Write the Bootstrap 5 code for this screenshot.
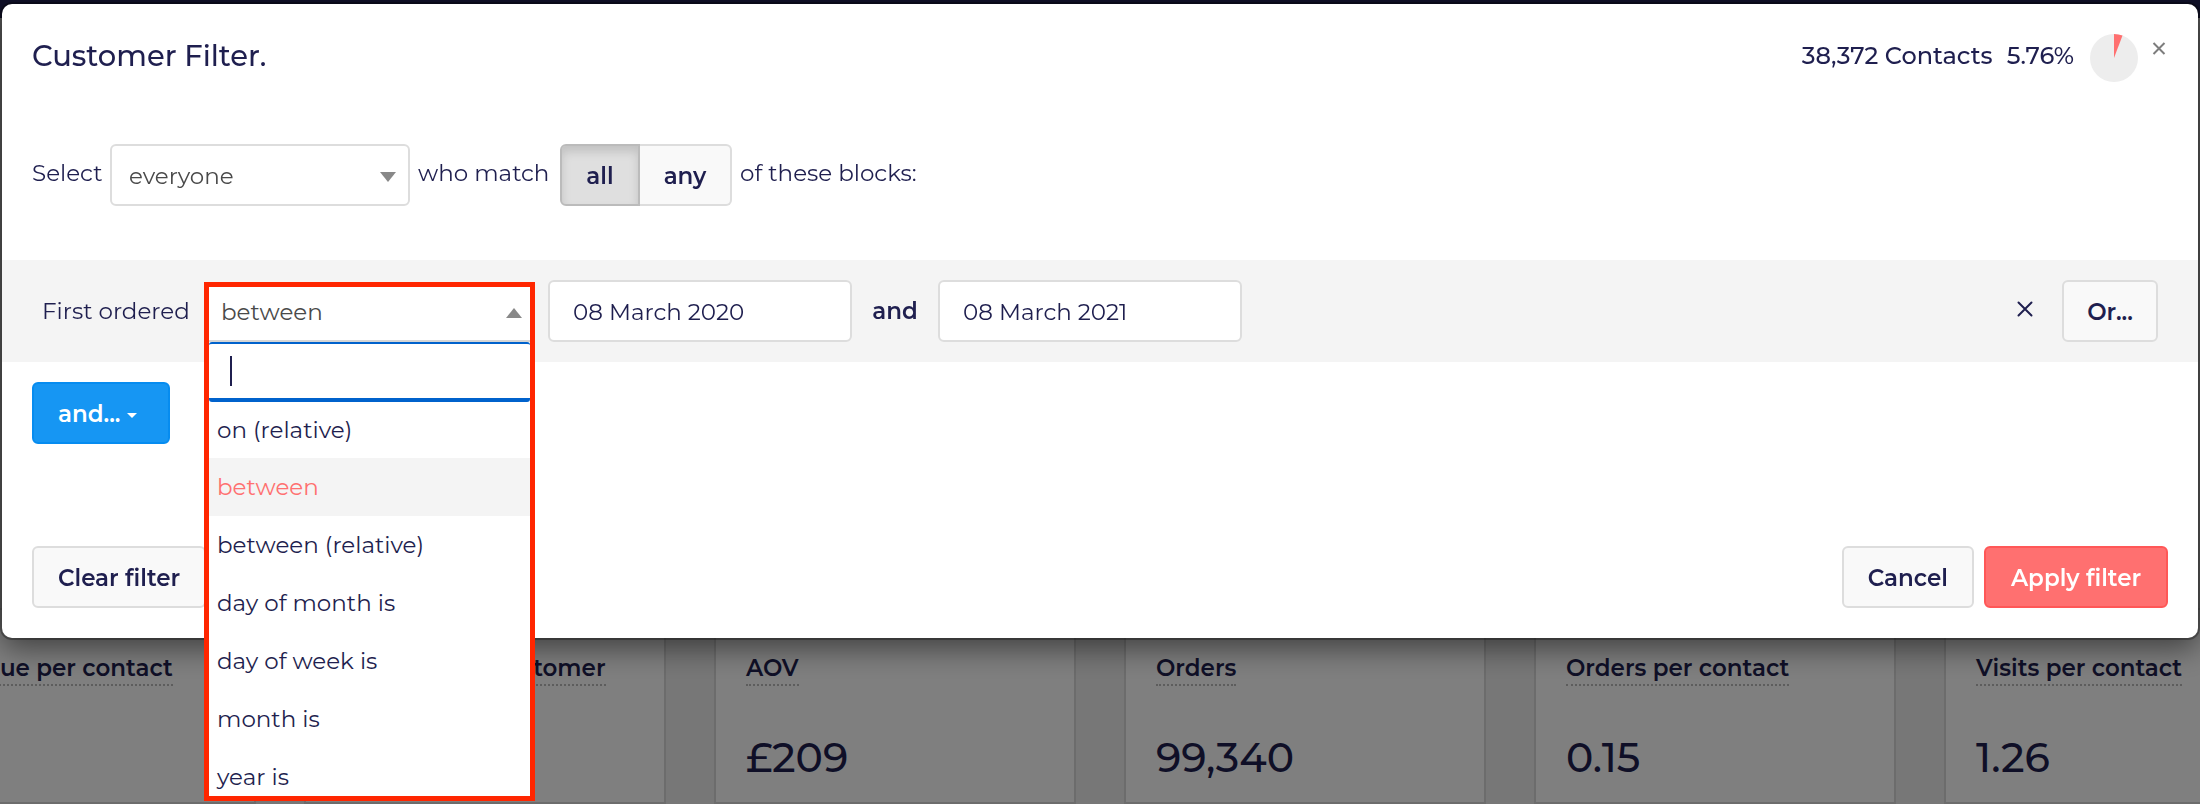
<!DOCTYPE html>
<html lang="en">
<head>
<meta charset="utf-8">
<meta name="viewport" content="width=device-width, initial-scale=1">
<title>Customer Filter</title>
<link href="https://cdn.jsdelivr.net/npm/bootstrap@5.3.0/dist/css/bootstrap.min.css" rel="stylesheet">
<style>
  :root { --ink: #1f1f4f; --line: #ddd; --coral: #ff7070; }
  body { font-family: Montserrat, Inter, "Open Sans", sans-serif; font-size: 23px; line-height: 32px; color: var(--ink); background: #eee; overflow: hidden; height: 100vh; }

  /* dashboard behind the dialog */
  .top-strip { height: 18px; background: var(--ink); }
  .stats { gap: 48px; margin-left: -106px; padding-top: 590px; }
  .stat { flex: 0 0 362px; height: 196px; padding: 42px 30px 0; background: #fff; border: 2px solid #d9d9d9; white-space: nowrap; }
  .stat-name { font-weight: 600; line-height: 32px; border-bottom: 2px dotted #bbb; }
  .stat-value { font-size: 41px; font-weight: 500; line-height: 48px; margin-top: 47px; }
  .shade { background: rgba(0,0,0,.5); }

  /* dialog */
  .filter-modal { padding: 4px 2px 0; overflow: hidden; }
  .filter-modal .modal-dialog { max-width: none; margin: 0; }
  .filter-modal .modal-content { border: 0; border-radius: 10px; color: var(--ink); box-shadow: 0 0 0 2px rgba(0,0,0,.3), 0 10px 30px rgba(0,0,0,.5); }
  .head { padding: 20px 32px 0 30px; height: 140px; }
  .head h1 { font-size: 29px; font-weight: 500; line-height: 34px; margin: 15px 0 0; }
  .count { font-size: 24px; font-weight: 500; padding-top: 16px; gap: 14px; }
  .pie { margin: 10px 14px 0 16px; }
  .x-btn { border: 0; background: none; padding: 0; line-height: 0; }
  .ctl { height: 62px; border: 2px solid var(--line); border-radius: 6px; background: #fff; color: var(--ink); }
  .pick { appearance: none; border: 0; background: transparent; color: #4a4a4a; width: 100%; height: 100%; outline: 0; }
  .pick-box { width: 300px; position: relative; }
  .pick-box .pick { padding: 2px 17px 0; }
  .tri { position: absolute; right: 12px; top: 26px; pointer-events: none; }
  .btn.act { height: 62px; font-size: 23px; font-weight: 600; line-height: 32px; padding: 2px 24px 0; border: 2px solid var(--line); border-radius: 6px; background: #f9f9f9; color: var(--ink); }
  .btn.act.on { background: #dfdfdf; border-color: #bbb; box-shadow: inset 0 6px 10px rgba(0,0,0,.13); border-radius: 6px 0 0 6px; width: 80px; padding: 2px 0 0; }
  .btn.act.off { border-left: 0; border-radius: 0 6px 6px 0; width: 92px; padding: 2px 0 0; }
  .btn.act.blue { background: #1696f3; border-color: #068cf0; color: #fff; width: 138px; text-align: left; }
  .btn.act.coral { background: var(--coral); border-color: #ff5757; color: #fff; width: 184px; padding: 2px 0 0; }
  .btn.act.or { width: 96px; padding: 2px 0 0; margin-left: 29px; }
  .scope { padding: 0 30px; height: 116px; }
  .scope .word { height: 58px; display: flex; align-items: center; white-space: nowrap; }
  .w-select { width: 78px; }
  .w-match { width: 150px; padding-left: 8px; }
  .w-blocks { padding-left: 8px; }
  .rule { background: #f4f4f4; padding: 20px 40px; }
  .w-first { width: 162px; white-space: nowrap; }
  .w-and { width: 86px; text-align: center; font-weight: 600; }
  .date { width: 304px; padding: 2px 23px 0; outline: 0; }
  .combo { width: 331px; height: 62px; position: relative; margin-right: 13px; }
  .combo-open { position: absolute; z-index: 5; top: 2px; left: 0; right: 0; border: 5px solid #ff2600; background: #fff; }
  .combo-head { position: relative; height: 55px; border-bottom: 2px solid #d5d5d5; }
  .combo-head .pick { padding: 0 12px 4px; }
  .combo-head .tri { right: 8px; top: 21px; }
  .search { display: flex; align-items: center; height: 60px; border-top: 2px solid #0062cc; border-bottom: 4px solid #0062cc; border-radius: 3px; padding-left: 21px; }
  .search input { flex: 1; min-width: 0; border: 0; outline: 0; background: none; padding: 0; }
  .caret-bar { width: 2px; height: 30px; background: var(--ink); }
  .opts { height: 394px; overflow: hidden; }
  .opts li { height: 58px; line-height: 58px; padding-left: 8px; }
  .opts li:first-child { height: 56px; line-height: 56px; }
  .opts li.hit { background: #f4f4f4; color: var(--coral); }
  .adder { padding: 20px 30px 0; height: 184px; }
  .foot { padding: 0 30px 30px; gap: 10px; }
</style>
</head>
<body>
<div aria-hidden="true">
  <div class="top-strip"></div>
  <main class="stats d-flex">
    <section class="stat"><span class="stat-name d-inline-block">Revenue per contact</span></section>
    <section class="stat"><span class="stat-name d-inline-block">Revenue per customer</span></section>
    <section class="stat"><span class="stat-name d-inline-block">AOV</span><div class="stat-value">£209</div></section>
    <section class="stat"><span class="stat-name d-inline-block">Orders</span><div class="stat-value">99,340</div></section>
    <section class="stat"><span class="stat-name d-inline-block">Orders per contact</span><div class="stat-value">0.15</div></section>
    <section class="stat"><span class="stat-name d-inline-block">Visits per contact</span><div class="stat-value">1.26</div></section>
  </main>
</div>

<div class="modal d-block shade filter-modal" role="dialog" aria-labelledby="filterTitle">
  <div class="modal-dialog">
    <div class="modal-content">
      <header class="head d-flex align-items-start">
        <h1 id="filterTitle">Customer Filter.</h1>
        <div class="count d-flex ms-auto"><span>38,372 Contacts</span><span>5.76%</span></div>
        <svg class="pie" width="48" height="48" viewBox="0 0 48 48"><circle cx="24" cy="24" r="24" fill="#ededed"/><path d="M24 24V0A24 24 0 0 1 32.5 1.6Z" fill="#ff7070"/></svg>
        <button class="x-btn" type="button" aria-label="Close"><svg width="14" height="50" viewBox="0 0 14 50"><path d="M1.500 19 12.500 30M12.500 19 1.500 30" stroke="#7d7d7d" stroke-width="2"/></svg></button>
      </header>

      <div class="scope d-flex align-items-start">
        <label class="word w-select" for="who">Select</label>
        <div class="ctl pick-box">
          <select id="who" class="pick"><option>everyone</option></select>
          <svg class="tri" width="16" height="10" viewBox="0 0 16 10"><path d="M0 0H16L8 10Z" fill="#888"/></svg>
        </div>
        <span class="word w-match">who match</span>
        <div class="d-flex" role="group" aria-label="Match mode">
          <button class="btn act on" type="button" aria-pressed="true">all</button>
          <button class="btn act off" type="button" aria-pressed="false">any</button>
        </div>
        <span class="word w-blocks">of these blocks:</span>
      </div>

      <div class="rule d-flex align-items-center">
        <label class="w-first" for="cond">First ordered</label>
        <div class="combo">
          <div class="combo-open">
            <div class="combo-head">
              <select id="cond" class="pick"><option>between</option></select>
              <svg class="tri" width="16" height="10" viewBox="0 0 16 10"><path d="M0 10H16L8 0Z" fill="#888"/></svg>
            </div>
            <div class="search"><span class="caret-bar"></span><input type="text" aria-label="Search conditions"></div>
            <ul class="opts list-unstyled mb-0" role="listbox" aria-label="Conditions">
              <li role="option">on (relative)</li>
              <li role="option" class="hit" aria-selected="true">between</li>
              <li role="option">between (relative)</li>
              <li role="option">day of month is</li>
              <li role="option">day of week is</li>
              <li role="option">month is</li>
              <li role="option">year is</li>
            </ul>
          </div>
        </div>
        <input class="ctl date" type="text" value="08 March 2020" aria-label="From date">
        <span class="w-and">and</span>
        <input class="ctl date" type="text" value="08 March 2021" aria-label="To date">
        <button class="x-btn ms-auto" type="button" aria-label="Remove rule"><svg width="16" height="20" viewBox="0 0 16 20"><path d="M1.500 1.500 14.500 14.500M14.500 1.500 1.500 14.500" stroke="#1f1f4f" stroke-width="2" stroke-linecap="round"/></svg></button>
        <button class="btn act or" type="button">Or...</button>
      </div>

      <div class="adder">
        <button class="btn act blue" type="button">and... <svg class="align-middle" width="10" height="5" viewBox="0 0 10 5"><path d="M0 0H10L5 5Z" fill="#fff"/></svg></button>
      </div>

      <footer class="foot d-flex">
        <button class="btn act me-auto" type="button">Clear filter</button>
        <button class="btn act" type="button">Cancel</button>
        <button class="btn act coral" type="button">Apply filter</button>
      </footer>
    </div>
  </div>
</div>
<script src="https://cdn.jsdelivr.net/npm/bootstrap@5.3.0/dist/js/bootstrap.bundle.min.js"></script>
</body>
</html>
